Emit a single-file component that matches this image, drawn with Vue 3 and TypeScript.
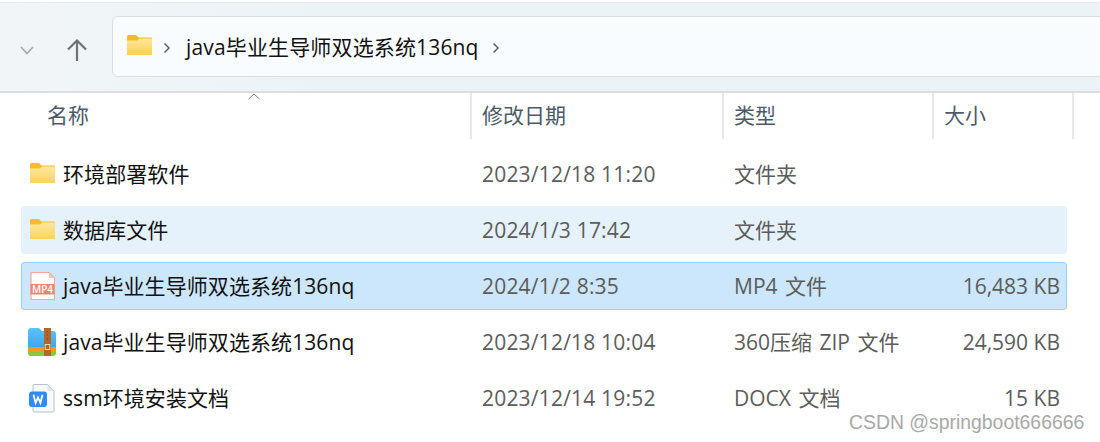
<script setup lang="ts">
interface Row {
  name: string
  date: string
  type: string
  size: string
  icon: 'folder' | 'mp4' | 'zip' | 'docx'
  state: string
}
const rows: Row[] = [
  { name: '环境部署软件', date: '2023/12/18 11:20', type: '文件夹', size: '', icon: 'folder', state: '' },
  { name: '数据库文件', date: '2024/1/3 17:42', type: '文件夹', size: '', icon: 'folder', state: 'hover' },
  { name: 'java毕业生导师双选系统136nq', date: '2024/1/2 8:35', type: 'MP4 文件', size: '16,483 KB', icon: 'mp4', state: 'selected' },
  { name: 'java毕业生导师双选系统136nq', date: '2023/12/18 10:04', type: '360压缩 ZIP 文件', size: '24,590 KB', icon: 'zip', state: '' },
  { name: 'ssm环境安装文档', date: '2023/12/14 19:52', type: 'DOCX 文档', size: '15 KB', icon: 'docx', state: '' },
]
</script>

<template>
  <div class="window">
    <div class="toolbar">
      <svg class="chev" width="14" height="9" viewBox="0 0 14 9"><path d="M1 1 L7 7.5 L13 1" fill="none" stroke="#a4a8ab" stroke-width="1.6"/></svg>
      <svg class="up" width="20" height="22" viewBox="0 0 20 22"><path d="M10 22 V1.5 M1 10.5 L10 1.5 L19 10.5" fill="none" stroke="#6f7274" stroke-width="2.2"/></svg>
      <div class="address">
        <svg width="25" height="20" viewBox="0 0 25 20" class="addr-folder">
          <defs><linearGradient id="fa" x1="0" y1="0" x2="0" y2="1"><stop offset="0" stop-color="#ffe79a"/><stop offset="1" stop-color="#ffcf57"/></linearGradient></defs>
          <path d="M1.5 0 H9 L11.5 2.5 H24 Q25 2.5 25 3.5 V19 Q25 20 24 20 H1 Q0 20 0 19 V1.5 Q0 0 1.5 0 Z" fill="#fbb81f"/>
          <path d="M0 5.5 H10 L12.5 3.5 H24 Q25 3.5 25 4.5 V19 Q25 20 24 20 H1 Q0 20 0 19 Z" fill="url(#fa)"/>
        </svg>
        <svg class="crumb first" width="8" height="12" viewBox="0 0 8 12"><path d="M1.5 1.5 L6 6 L1.5 10.5" fill="none" stroke="#5f6264" stroke-width="1.5"/></svg>
        <span class="addr-text">java毕业生导师双选系统136nq</span>
        <svg class="crumb last" width="8" height="12" viewBox="0 0 8 12"><path d="M1.5 1.5 L6 6 L1.5 10.5" fill="none" stroke="#5f6264" stroke-width="1.5"/></svg>
      </div>
    </div>

    <div class="header">
      <svg class="sort" width="14" height="7" viewBox="0 0 14 7"><path d="M1.5 6 L7 1 L12.5 6" fill="none" stroke="#7d8082" stroke-width="1"/></svg>
      <div class="hcol name">名称</div>
      <div class="hcol">修改日期</div>
      <div class="hcol">类型</div>
      <div class="hcol">大小</div>
    </div>

    <div class="list">
      <div v-for="r in rows" :key="r.name + r.date" class="row" :class="r.state">
        <div class="cell-name">
          <span class="icon">
            <svg v-if="r.icon === 'folder'" class="ic-folder" width="25" height="20" viewBox="0 0 25 20">
              <defs><linearGradient id="fb" x1="0" y1="0" x2="0" y2="1"><stop offset="0" stop-color="#ffe8a0"/><stop offset="1" stop-color="#ffd25f"/></linearGradient></defs>
              <path d="M1.5 0 H9 L11.5 2.5 H24 Q25 2.5 25 3.5 V19 Q25 20 24 20 H1 Q0 20 0 19 V1.5 Q0 0 1.5 0 Z" fill="#fbbb2c"/>
              <path d="M0 5.5 H10 L12.5 3.5 H24 Q25 3.5 25 4.5 V19 Q25 20 24 20 H1 Q0 20 0 19 Z" fill="url(#fb)"/>
            </svg>
            <svg v-else-if="r.icon === 'mp4'" class="ic-mp4" width="25" height="28" viewBox="0 0 25 28">
              <path d="M1 1.5 Q1 0.5 2 0.5 H19 L24.5 6 V26.5 Q24.5 27.5 23.5 27.5 H2 Q1 27.5 1 26.5 Z" fill="#fff" stroke="#f3a899" stroke-width="1.2"/>
              <path d="M19 0.5 V6 H24.5 Z" fill="#f6c0b3"/>
              <rect x="0.5" y="12" width="24" height="10.5" fill="#ef8571"/>
              <text x="12.5" y="21.2" text-anchor="middle" class="mp4-label">MP4</text>
            </svg>
            <svg v-else-if="r.icon === 'zip'" class="ic-zip" width="28" height="28" viewBox="0 0 28 28">
              <defs><linearGradient id="zb" x1="0" y1="0" x2="0" y2="1"><stop offset="0" stop-color="#5cc2f8"/><stop offset="1" stop-color="#3fa6ee"/></linearGradient></defs>
              <path d="M0 3 Q0 0 3 0 H11 L14 3 H25 Q28 3 28 6 V20 H0 Z" fill="url(#zb)"/>
              <rect x="0" y="19" width="28" height="5" fill="#f59a1f"/>
              <path d="M0 23.5 H28 V25 Q28 28 25 28 H3 Q0 28 0 25 Z" fill="#8cc63e"/>
              <rect x="16" y="0" width="7" height="28" fill="#b2662a"/>
              <rect x="17.2" y="16.5" width="4.6" height="5" fill="none" stroke="#f2d9a8" stroke-width="1"/>
              <path d="M19.5 3 V12" stroke="#8a4d1d" stroke-width="1.2" stroke-dasharray="1.5 2"/>
            </svg>
            <svg v-else class="ic-docx" width="26" height="29" viewBox="0 0 26 29">
              <path d="M4 1.5 Q4 0.5 5 0.5 H18.5 L25 7 V26.5 Q25 28 23.5 28 H6 Q4 28 4 26.5 Z" fill="#f7f9fd" stroke="#b9c0cf" stroke-width="1"/>
              <path d="M18.5 0.5 V7 H25 Z" fill="#dfe4ee"/>
              <rect x="0" y="7.5" width="18" height="15.5" rx="3" fill="#2d8cf6"/>
              <path d="M4.5 10.8 L6.6 19 L9 13.5 L11.4 19 L13.5 10.8" fill="none" stroke="#fff" stroke-width="1.8"/>
            </svg>
          </span>
          <span class="name-text">{{ r.name }}</span>
        </div>
        <div class="cell date">{{ r.date }}</div>
        <div class="cell type">{{ r.type }}</div>
        <div class="cell size">{{ r.size }}</div>
      </div>
    </div>

    <div class="watermark">CSDN @springboot666666</div>
  </div>
</template>

<style scoped>
.window {
  position: relative;
  width: 1100px;
  height: 442px;
  overflow: hidden;
  background: #fff;
  font-family: "Open Sans", "Noto Sans CJK SC", sans-serif;
  font-size: 21px;
}
.toolbar {
  margin-top: 2px;
  height: 88px;
  border-top: 1px solid #e6e9eb;
  border-bottom: 2px solid #d8dee1;
  background: linear-gradient(90deg, #f1f5f8, #ecf3f6 30%);
  display: flex;
  align-items: center;
}
.chev { margin-left: 20px; margin-top: 7px; }
.up { margin-left: 33px; margin-top: 5px; }
.address {
  margin-left: 25px;
  flex: 1;
  height: 59px;
  margin-top: -1px;
  margin-right: -6px;
  background: #f9fcfe;
  border: 1px solid #d9dee1;
  border-radius: 6px;
  display: flex;
  align-items: center;
  color: #111;
}
.addr-folder { margin-left: 14px; margin-top: -3px; }
.crumb.first { margin-left: 11px; margin-top: 3px; }
.addr-text { margin-left: 15px; padding-bottom: 1px; letter-spacing: 0.15px; }
.crumb.last { margin-left: 13px; margin-top: 3px; }
.header {
  position: relative;
  height: 46px;
  display: grid;
  grid-template-columns: 472px 252px 210px 140px;
  color: #4c5a68;
  font-size: 21px;
}
.sort { position: absolute; left: 247px; top: 0; }
.hcol {
  border-right: 2px solid #e8e8e8;
  padding-left: 10px;
  line-height: 45px;
}
.hcol.name { padding-left: 47px; }
.list {
  margin-top: 11px;
  display: flex;
  flex-direction: column;
  gap: 8px;
  padding-left: 21px;
  width: 1046px;
}
.row {
  box-sizing: border-box;
  height: 48px;
  padding-bottom: 2px;
  display: grid;
  grid-template-columns: 450px 252px 210px 132px;
  align-items: center;
  border: 1px solid transparent;
  border-radius: 3px;
  color: #5c5c5c;
}
.row.hover { background: #e5f1fb; border-color: #e5f1fb; }
.row.selected { background: #cce6fb; border-color: #99d0f8; }
.cell-name { display: flex; align-items: center; color: #111; }
.icon { width: 41px; display: flex; justify-content: flex-start; padding-left: 7px; box-sizing: border-box; }
.ic-folder { margin-top: -1px; margin-left: 1px; }
.ic-zip { margin-left: -1px; margin-top: 1px; }
.ic-mp4 { margin-top: 2px; margin-left: 1px; }
.ic-docx { margin-top: 2px; }
.name-text { letter-spacing: 0.08px; }
.cell { padding-left: 10px; }
.cell.date { letter-spacing: 0.2px; padding-top: 1px; }
.cell.type { word-spacing: 2px; }
.cell.size { text-align: right; padding-right: 6px; padding-top: 1px; }
.mp4-label { font: 600 10px "Open Sans", sans-serif; fill: #fff; }
.watermark {
  position: absolute;
  left: 849px;
  top: 411px;
  font-family: "Liberation Sans", sans-serif;
  font-size: 19.4px;
  color: #a8a8a8;
  white-space: nowrap;
}
</style>
